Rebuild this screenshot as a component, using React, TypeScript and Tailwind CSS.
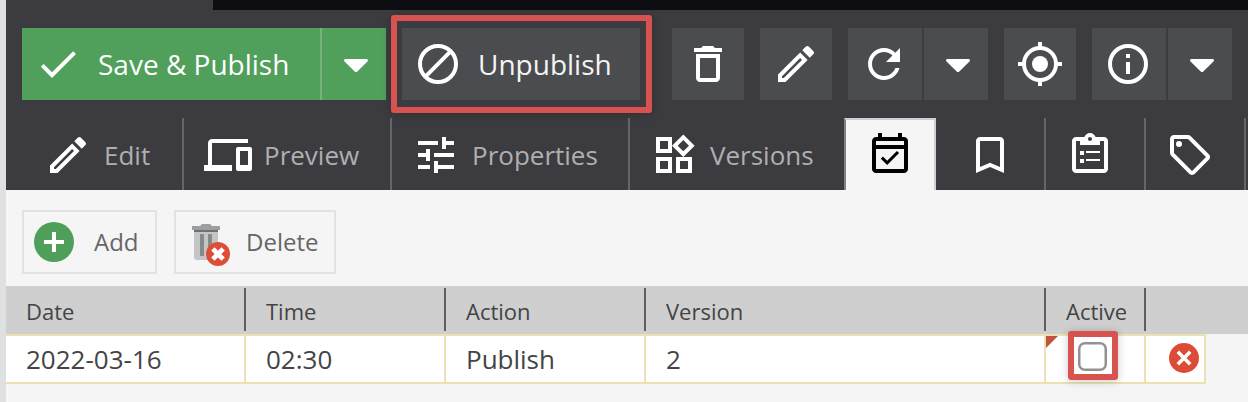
import React from "react";

type IconProps = { children: React.ReactNode; className?: string };

function Icon({ children, className = "text-white" }: IconProps) {
  return (
    <svg viewBox="0 0 24 24" width="48" height="48" fill="currentColor" className={`shrink-0 ${className}`}>
      {children}
    </svg>
  );
}

const EditIcon = () => (
  <Icon>
    <path d="M14.06 9.02l.92.92L5.92 19H5v-.92l9.06-9.06M17.66 3c-.25 0-.51.1-.7.29l-1.83 1.83 3.75 3.75 1.83-1.83c.39-.39.39-1.02 0-1.41l-2.34-2.34c-.2-.2-.45-.29-.71-.29zm-3.6 3.19L3 17.25V21h3.75L17.81 9.94l-3.75-3.75z" />
  </Icon>
);

const Caret = () => (
  <svg viewBox="0 0 24 14" width="24" height="14" className="mt-1 shrink-0 text-white" fill="currentColor">
    <path d="M1.5 0h21c1.3 0 2 1.4 1 2.4L13.3 12.4c-.8.8-1.8.8-2.6 0L.5 2.4C-.5 1.4.2 0 1.5 0z" />
  </svg>
);

function ToolButton({ className, children }: { className: string; children: React.ReactNode }) {
  return (
    <button className={`flex h-[72px] shrink-0 items-center justify-center bg-[#4b4c4f] ${className}`}>
      {children}
    </button>
  );
}

function Toolbar() {
  return (
    <div className="flex h-[90px] items-start pt-[18px] pl-4">
      <div className="flex h-[72px] bg-[#509f5b] text-white">
        <button className="flex w-[300px] items-center border-r-2 border-[#73b27c] pl-3 text-[28px]">
          <Icon>
            <path d="M9 16.17L4.83 12l-1.42 1.41L9 19 21 7l-1.41-1.41z" />
          </Icon>
          <span className="ml-4 whitespace-nowrap">Save &amp; Publish</span>
        </button>
        <button className="flex w-16 items-center justify-center pl-[3px]">
          <Caret />
        </button>
      </div>
      <div className="relative ml-4">
        <button className="flex h-[72px] w-[238px] items-center bg-[#4b4c4f] pl-3 text-[28px] text-[#f4f4f4]">
          <Icon>
            <path
              d="M12 3a9 9 0 1 0 0 18a9 9 0 1 0 0-18zM5.6 18.4L18.4 5.6"
              fill="none"
              stroke="currentColor"
              strokeWidth="2"
            />
          </Icon>
          <span className="ml-4">Unpublish</span>
        </button>
        <div className="pointer-events-none absolute -top-[13px] -left-[11px] h-[98px] w-[261px] rounded-[3px] border-6 border-[#d8534f] shadow-[0_1px_8px_rgba(0,0,0,0.22)]" />
      </div>
      <ToolButton className="ml-8 w-[72px]">
        <Icon>
          <path d="M6 19c0 1.1.9 2 2 2h8c1.1 0 2-.9 2-2V7H6v12zM8 9h8v10H8V9zm7.5-5l-1-1h-5l-1 1H5v2h14V4z" />
        </Icon>
      </ToolButton>
      <ToolButton className="ml-4 w-[72px]">
        <EditIcon />
      </ToolButton>
      <ToolButton className="ml-4 w-[74px] pr-0.5">
        <Icon>
          <path d="M17.65 6.35C16.2 4.9 14.21 4 12 4c-4.42 0-7.99 3.58-7.99 8s3.57 8 7.99 8c3.73 0 6.84-2.55 7.73-6h-2.08c-.82 2.33-3.04 4-5.65 4-3.31 0-6-2.69-6-6s2.69-6 6-6c1.66 0 3.14.69 4.22 1.78L13 11h7V4l-2.35 2.35z" />
        </Icon>
      </ToolButton>
      <ToolButton className="ml-0.5 w-16 pl-1">
        <Caret />
      </ToolButton>
      <ToolButton className="ml-4 w-[72px]">
        <Icon>
          <circle cx="12" cy="12" r="4" />
          <path
            d="M12 4a8 8 0 1 0 0 16a8 8 0 1 0 0-16zM12 1v3M12 20v3M1 12h3M20 12h3"
            fill="none"
            stroke="currentColor"
            strokeWidth="2"
          />
        </Icon>
      </ToolButton>
      <ToolButton className="ml-4 w-[74px] pr-0.5">
        <Icon>
          <circle cx="12" cy="12" r="9" fill="none" stroke="currentColor" strokeWidth="2" />
          <path d="M11 7h2v2h-2zM11 11h2v6h-2z" />
        </Icon>
      </ToolButton>
      <ToolButton className="ml-0.5 w-16 pl-1">
        <Caret />
      </ToolButton>
    </div>
  );
}

function Tab({ className, children }: { className: string; children: React.ReactNode }) {
  return (
    <div className={`flex h-[72px] shrink-0 items-center pt-0.5 text-[26px] text-[#afafb1] ${className}`}>
      {children}
    </div>
  );
}

function Tabs() {
  return (
    <div className="mt-[18px] flex h-[72px]">
      <Tab className="w-[178px] border-r-2 border-[#656569] pl-[38px]">
        <EditIcon />
        <span className="ml-3">Edit</span>
      </Tab>
      <Tab className="w-[208px] border-r-2 border-[#656569] pl-5">
        <Icon>
          <path d="M4 6h18V4H4c-1.1 0-2 .9-2 2v11H0v3h14v-3H4V6zm19 2h-6c-.55 0-1 .45-1 1v10c0 .55.45 1 1 1h6c.55 0 1-.45 1-1V9c0-.55-.45-1-1-1zm-1 9h-4v-7h4v7z" />
        </Icon>
        <span className="ml-3">Preview</span>
      </Tab>
      <Tab className="w-[238px] border-r-2 border-[#656569] pl-5">
        <Icon>
          <path d="M3 17v2h6v-2H3zM3 5v2h10V5H3zm10 16v-2h8v-2h-8v-2h-2v6h2zM7 9v2H3v2h4v2h2V9H7zm14 4v-2H11v2h10zm-6-4h2V7h4V5h-4V3h-2v6z" />
        </Icon>
        <span className="ml-3">Properties</span>
      </Tab>
      <Tab className="w-[214px] pl-5">
        <Icon>
          <path d="M16.66 4.52l2.83 2.83-2.83 2.83-2.83-2.83 2.83-2.83M9 5v4H5V5h4m10 10v4h-4v-4h4M9 15v4H5v-4h4m7.66-13.31L11 7.34 16.66 13l5.66-5.66-5.66-5.65zM11 3H3v8h8V3zm10 10h-8v8h8v-8zm-10 0H3v8h8v-8z" />
        </Icon>
        <span className="ml-3">Versions</span>
      </Tab>
      <div className="flex h-[72px] w-[92px] shrink-0 items-center justify-center border-t-2 border-r-2 border-l-2 border-t-[#cfd0d1] border-r-[#cfd0d1] border-l-[#808083] bg-[#f5f5f5]">
        <Icon className="text-black">
          <path d="M16.53 11.06L15.47 10l-4.88 4.88-2.12-2.12-1.06 1.06L10.59 17l5.94-5.94zM19 3h-1V1h-2v2H8V1H6v2H5c-1.11 0-1.99.9-1.99 2L3 19c0 1.1.89 2 2 2h14c1.1 0 2-.9 2-2V5c0-1.1-.9-2-2-2zm0 16H5V9h14v10zM5 7V5h14v2H5z" />
        </Icon>
      </div>
      <Tab className="w-[110px] border-r-2 border-[#656569] pl-[30px]">
        <Icon>
          <path d="M17 3H7c-1.1 0-2 .9-2 2v16l7-3 7 3V5c0-1.1-.9-2-2-2zm0 15l-5-2.18L7 18V5h10v13z" />
        </Icon>
      </Tab>
      <Tab className="w-[100px] border-r-2 border-[#656569] pl-5">
        <Icon>
          <path
            fillRule="evenodd"
            d="M19 3h-4.18C14.4 1.84 13.3 1 12 1s-2.4.84-2.82 2H5c-1.1 0-2 .9-2 2v14c0 1.1.9 2 2 2h14c1.1 0 2-.9 2-2V5c0-1.1-.9-2-2-2zM12 3c.55 0 1 .45 1 1s-.45 1-1 1-1-.45-1-1 .45-1 1-1zM19 19H5V5h2v2h10V5h2v14z"
          />
          <path d="M7 10h2v2H7zM7 14h2v2H7zM10 10h7v1h-7zM10 14h7v1h-7z" />
        </Icon>
      </Tab>
      <Tab className="w-[100px] border-r-2 border-[#656569] pl-5">
        <Icon>
          <path d="M21.41 11.58l-9-9C12.05 2.22 11.55 2 11 2H4c-1.1 0-2 .9-2 2v7c0 .55.22 1.05.59 1.42l9 9c.36.36.86.58 1.41.58s1.05-.22 1.41-.59l7-7c.37-.36.59-.86.59-1.41s-.23-1.06-.59-1.42zM13 20.01L4 11V4h7v-.01l9 9-7 7.02z" />
          <circle cx="6.5" cy="6.5" r="1.5" />
        </Icon>
      </Tab>
    </div>
  );
}

function Actions() {
  return (
    <div className="flex h-24 items-start gap-[17px] pt-5 pl-4 text-[24px] text-[#666]">
      <button className="flex h-16 w-[135px] items-center border-2 border-[#e2e2e2] pl-[10px]">
        <svg width="40" height="40" viewBox="0 0 40 40">
          <circle cx="20" cy="20" r="20" fill="#4f9f5a" />
          <path d="M20 10v20M10 20h20" stroke="#fff" strokeWidth="4" />
        </svg>
        <span className="ml-5">Add</span>
      </button>
      <button className="flex h-16 w-[162px] items-center border-2 border-[#e2e2e2] pl-[14px]">
        <svg width="40" height="44" viewBox="0 0 40 44" className="mt-1">
          <path d="M4 8h24v27a3 3 0 0 1-3 3H7a3 3 0 0 1-3-3z" fill="#c3c5c7" />
          <path d="M4 8h24v2H4z" fill="#6f7173" />
          <path d="M2 4h8l2-2h8l2 2h8v4H2z" fill="#9c9ea0" />
          <path d="M10 12h4v22h-4zM18 12h4v22h-4z" fill="#87898b" />
          <circle cx="28" cy="32" r="12" fill="#dd4d38" />
          <path d="M22.9 26.9l10.2 10.2M33.1 26.9L22.9 37.1" stroke="#fff" strokeWidth="4.8" />
        </svg>
        <span className="ml-4">Delete</span>
      </button>
    </div>
  );
}

const columns = [
  { label: "Date", value: "2022-03-16", width: "w-[240px]" },
  { label: "Time", value: "02:30", width: "w-[200px]" },
  { label: "Action", value: "Publish", width: "w-[200px]" },
  { label: "Version", value: "2", width: "w-[400px]" },
];

function Schedule() {
  return (
    <div className="text-[#444]">
      <div className="flex h-12 bg-[#cfcfcf] pt-0.5 text-[22px]">
        {columns.map((c) => (
          <div key={c.label} className={`flex h-[43px] items-center border-r-2 border-[#5e5e60] pt-[3px] pl-5 ${c.width}`}>
            {c.label}
          </div>
        ))}
        <div className="flex h-[43px] w-[100px] items-center border-r-2 border-[#5e5e60] pt-[3px] pl-5">Active</div>
      </div>
      <div className="flex h-[50px] w-[1200px] border-y-2 border-[#ede0b2] bg-white text-[26px]">
        {columns.map((c) => (
          <div key={c.label} className={`flex items-center border-r-2 border-[#ede0b2] pl-5 ${c.width}`}>
            {c.value}
          </div>
        ))}
        <div className="relative flex w-[100px] items-start border-r-2 border-[#ede0b2] pt-[6px] pl-8">
          <svg className="absolute top-0 left-0" width="12" height="12" viewBox="0 0 12 12">
            <path d="M0 0h12L0 12z" fill="#c0533c" />
          </svg>
          <svg width="29" height="29" viewBox="0 0 29 29">
            <rect x="1.25" y="1.25" width="26.5" height="26.5" rx="5.5" fill="#fff" stroke="#929292" strokeWidth="2.5" />
          </svg>
          <div className="absolute -top-[5px] left-[22px] h-[49px] w-[50px] rounded-[3px] border-6 border-[#d8534f] shadow-[0_1px_8px_rgba(0,0,0,0.22)]" />
        </div>
        <div className="flex w-[60px] items-start border-r-2 border-[#ede0b2] pt-[7px] pl-[23px]">
          <svg width="30" height="30" viewBox="0 0 30 30">
            <circle cx="15" cy="15" r="15" fill="#dd4b37" />
            <path d="M8.8 8.8l12.4 12.4M21.2 8.8L8.8 21.2" stroke="#fff" strokeWidth="3.6" />
          </svg>
        </div>
      </div>
    </div>
  );
}

export default function App() {
  return (
    <div className="flex h-[402px] w-[1248px] overflow-hidden bg-[#f5f5f5] font-['Open_Sans',sans-serif]">
      <div className="w-[6px] shrink-0 bg-[#dfe0e2]" />
      <div className="w-[1242px] shrink-0">
        <div className="h-[190px] bg-[#3c3c40]">
          <div className="ml-[207px] h-[10px] bg-[#0d0e12]" />
          <Toolbar />
          <Tabs />
        </div>
        <Actions />
        <Schedule />
      </div>
    </div>
  );
}
